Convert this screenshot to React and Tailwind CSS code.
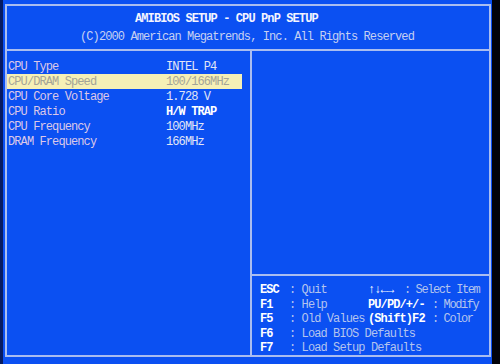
const ITEMS = [
  { label: "CPU Type", value: "INTEL P4" },
  { label: "CPU/DRAM Speed", value: "100/166MHz", active: true },
  { label: "CPU Core Voltage", value: "1.728 V" },
  { label: "CPU Ratio", value: "H/W TRAP", bold: true },
  { label: "CPU Frequency", value: "100MHz" },
  { label: "DRAM Frequency", value: "166MHz" },
];

const KEYS = [
  { key: "ESC", desc: "Quit", alt: "↑↓←→", altW: "w-[36px]", altDesc: "Select Item" },
  { key: "F1", desc: "Help", alt: "PU/PD/+/-", altW: "w-[64px]", altDesc: "Modify" },
  { key: "F5", desc: "Old Values", alt: "(Shift)F2", altW: "w-[64px]", altDesc: "Color" },
  { key: "F6", desc: "Load BIOS Defaults" },
  { key: "F7", desc: "Load Setup Defaults" },
];

const mono = { fontFamily: '"Liberation Mono", "DejaVu Sans Mono", monospace' };

export default function App() {
  return (
    <div
      className="w-[500px] h-[364px] bg-[#0b50f2] flex overflow-hidden text-[12px] leading-none tracking-[-0.9px]"
      style={mono}
    >
      <div className="w-[3px] shrink-0 bg-[#061a60]" />
      <div className="flex-1 min-w-0 pt-[4px] pl-[2px] pr-[1px] pb-[7px]">
        <div className="h-full border-2 border-[#aabdf0] flex flex-col">
          {/* header */}
          <div className="h-[43px] flex flex-col pt-[7px] gap-[6px] whitespace-pre">
            <div className="pl-[128px] font-bold text-[#f4f4ff]">AMIBIOS SETUP - CPU PnP SETUP</div>
            <div className="pl-[73px] text-[#c6d0f2]">(C)2000 American Megatrends, Inc. All Rights Reserved</div>
          </div>
          <div className="h-[2px] bg-[#aabdf0]" />
          <div className="flex-1 flex min-h-0">
            {/* left panel */}
            <div className="w-[245px] shrink-0 border-r-2 border-[#aabdf0] pt-[8px] pr-[8px]">
              {ITEMS.map((it) => (
                <div
                  key={it.label}
                  className={`h-[15px] flex items-center whitespace-pre ${it.active ? "bg-[#f6f0b6] text-[#a4a496]" : ""}`}
                >
                  <span className={`w-[159px] shrink-0 pl-[1px] ${it.active ? "" : "text-[#dcc8e8]"}`}>{it.label}</span>
                  <span className={it.bold ? "font-bold text-white" : it.active ? "" : "text-[#e2e6f6]"}>
                    {it.value}
                  </span>
                </div>
              ))}
            </div>
            {/* right panel */}
            <div className="flex-1 min-w-0 flex flex-col">
              <div className="flex-1 border-b-2 border-[#aabdf0]" />
              <div className="h-[79px] pt-[7px] pl-[8px]">
                {KEYS.map((k) => (
                  <div key={k.key} className="h-[14.5px] flex items-center whitespace-pre">
                    <span className="w-[29px] shrink-0 font-bold text-white">{k.key}</span>
                    <span className="w-[79px] shrink-0 text-[#b4c4ee]">: {k.desc}</span>
                    {k.alt && (
                      <>
                        <span className={`${k.altW} shrink-0 font-bold text-white`}>{k.alt}</span>
                        <span className="text-[#b4c4ee] tracking-[-1.4px]">: {k.altDesc}</span>
                      </>
                    )}
                  </div>
                ))}
              </div>
            </div>
          </div>
        </div>
      </div>
      <div className="w-[8px] shrink-0 bg-[#02030a]" />
    </div>
  );
}
